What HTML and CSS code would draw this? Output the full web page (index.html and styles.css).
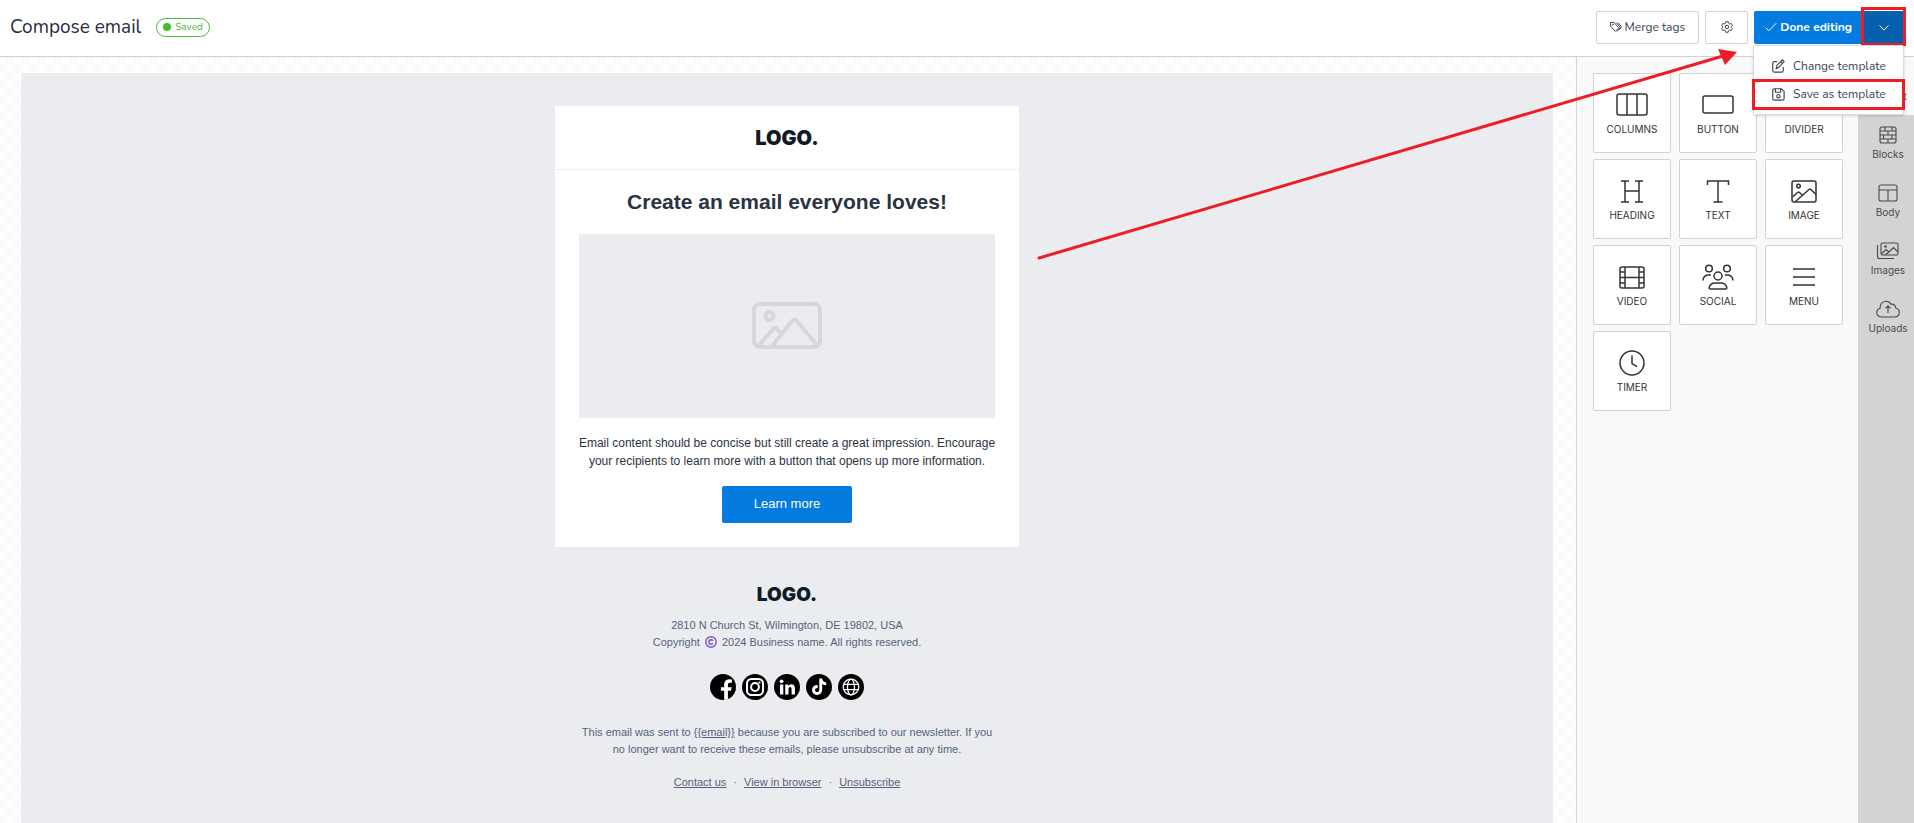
FILE: index.html
```html
<!DOCTYPE html>
<html lang="en">
<head>
    <meta charset="UTF-8">
    <meta name="viewport" content="width=device-width, initial-scale=1.0">
    <title>Compose email</title>
    <link rel="stylesheet" href="styles.css">
</head>
<body>
    <header class="topbar">
        <h1 class="page-title">Compose email</h1>
        <span class="status">Saved</span>

        <div class="actions">
            <button class="btn" type="button">
                <svg class="btn-icon" viewBox="0 0 16 16">
                    <path d="M.8 2v5l6.400 6.800 4.600-4.800L5.200 2zM8 2l6 6.600-4.600 5.400M11 2.300l4.300 5.400-2.600 4"/>
                    <circle cx="3.800" cy="5" r=".6"/>
                </svg>
                Merge tags
            </button>
            <button class="btn btn-square" type="button" aria-label="Settings">
                <svg class="btn-icon" viewBox="0 0 16 16">
                    <path d="M6.400 1h3.200l.5 2 1.500.9 2-.6 1.600 2.700-1.500 1.400v1.200l1.500 1.400-1.600 2.700-2-.6-1.500.9-.5 2H6.400l-.5-2-1.500-.9-2 .6L.8 10l1.500-1.400V7.400L.8 6l1.600-2.700 2 .6L5.900 3z"/>
                    <circle cx="8" cy="8" r="2.300"/>
                </svg>
            </button>
            <div class="split">
                <button class="btn btn-primary" type="button">
                    <svg class="btn-icon" viewBox="0 0 16 16"><path d="M1 9l4 4L15 3"/></svg>
                    Done editing
                </button>
                <button class="btn btn-toggle marked" type="button" aria-label="More actions" aria-expanded="true">
                    <svg class="btn-icon" viewBox="0 0 16 16"><path d="M2 6l6 6 6-6"/></svg>
                </button>
                <div class="dropdown">
                    <button class="dropdown-item" type="button">
                        <svg viewBox="0 0 16 16">
                            <path d="M7 3H4Q2 3 2 5v8q0 2 2 2h8q2 0 2-2V9"/>
                            <path d="M6 11l1-4L13 1l2 2-6 6.500zM11 3l2 2"/>
                        </svg>
                        Change template
                    </button>
                    <button class="dropdown-item marked" type="button">
                        <svg viewBox="0 0 16 16">
                            <path d="M4 2h8L15 5v8q0 2-2 2H4q-2 0-2-2V4q0-2 2-2z"/>
                            <path d="M5 2v4h6V2"/>
                            <circle cx="8.500" cy="10.500" r="1.900"/>
                        </svg>
                        Save as template
                    </button>
                </div>
            </div>
        </div>
    </header>

    <main class="editor">
        <section class="stage">
            <div class="canvas">
                <article class="email">
                    <div class="email-brand logo">LOGO.</div>
                    <div class="email-body">
                        <h2>Create an email everyone loves!</h2>
                        <div class="placeholder">
                            <svg viewBox="0 0 70 48">
                                <rect x="2" y="2" width="66" height="43" rx="6"/>
                                <circle cx="17.500" cy="14" r="4"/>
                                <path d="M6.500 44L21 27q2-2.500 4 0l3.500 4.500M20 44L40.500 18.500q2-2.500 4 0L65.500 44"/>
                            </svg>
                        </div>
                        <p>Email content should be concise but still create a great impression. Encourage your recipients to learn more with a button that opens up more information.</p>
                        <button class="cta" type="button">Learn more</button>
                    </div>
                </article>

                <footer class="email-footer">
                    <div class="logo logo-small">LOGO.</div>
                    <p>2810 N Church St, Wilmington, DE 19802, USA<br>
                        Copyright
                        <svg class="copyright" viewBox="0 0 12 12" role="img" aria-label="©">
                            <circle cx="6" cy="6" r="5.200"/>
                            <path d="M8 4.600Q7.300 3.700 6.100 3.700 3.900 3.800 3.900 6t2.200 2.300Q7.300 8.300 8 7.400"/>
                        </svg>
                        2024 Business name. All rights reserved.</p>
                    <div class="socials">
                        <a href="#" aria-label="Facebook">
                            <svg viewBox="0 0 26 26"><circle cx="13" cy="13" r="13"/><path class="w" d="M14.200 26v-9.300h-3.300v-3.500h3.300v-2.700q0-5 4.700-5.200 1.800 0 3 .3v3.100h-1.800q-2.200-.1-2.200 2v2.500h3.700l-.6 3.500h-3.100V25.300z"/></svg>
                        </a>
                        <a href="#" aria-label="Instagram">
                            <svg viewBox="0 0 26 26"><circle cx="13" cy="13" r="13"/><g class="l"><rect x="5" y="5" width="16" height="16" rx="4.500"/><circle cx="13" cy="13" r="3.900"/></g><circle class="w" cx="17.500" cy="8.500" r="1.100"/></svg>
                        </a>
                        <a href="#" aria-label="LinkedIn">
                            <svg viewBox="0 0 26 26"><circle cx="13" cy="13" r="13"/><path class="w" d="M6 10.500h3.300V20.500H6zM11.200 10.500h3.100v1.400q1-1.700 3-1.700 3.600 0 3.600 4.300v6h-3.300v-5.300q0-2.200-1.500-2.200-1.600 0-1.600 2.200v5.300h-3.300z"/><circle class="w" cx="7.600" cy="7.300" r="1.900"/></svg>
                        </a>
                        <a href="#" aria-label="TikTok">
                            <svg viewBox="0 0 26 26"><circle cx="13" cy="13" r="13"/><path class="w" d="M13.300 4.500h2.900q.4 3.600 4 3.900v2.900q-2.300 0-4-1.200v5.700q-.3 5-5.200 5.200-4.700-.3-5-4.900.3-5 5.700-5.100v3q-2.600-.1-2.800 2.100.2 2 2.200 2.100 2.100-.1 2.200-2.500z"/></svg>
                        </a>
                        <a href="#" aria-label="Website">
                            <svg viewBox="0 0 26 26"><circle cx="13" cy="13" r="13"/><g class="l thin"><circle cx="13" cy="13" r="7.800"/><ellipse cx="13" cy="13" rx="3.500" ry="7.800"/><path d="M6 10.300h14M6 15.700h14"/></g></svg>
                        </a>
                    </div>
                    <p>This email was sent to <a href="#">{{email}}</a> because you are subscribed to our newsletter. If you no longer want to receive these emails, please unsubscribe at any time.</p>
                    <nav class="footer-links">
                        <a href="#">Contact us</a><span>·</span><a href="#">View in browser</a><span>·</span><a href="#">Unsubscribe</a>
                    </nav>
                </footer>
            </div>
        </section>

        <aside class="tools">
            <button class="tool" type="button">
                <svg viewBox="0 0 32 26"><rect x="1" y="2" width="30" height="21" rx="2"/><path d="M11 2v21M21 2v21"/></svg>
                Columns
            </button>
            <button class="tool" type="button">
                <svg viewBox="0 0 32 26"><rect x="1" y="4" width="30" height="17" rx="2"/></svg>
                Button
            </button>
            <button class="tool" type="button">
                <svg viewBox="0 0 32 26"><path d="M1 13h30"/></svg>
                Divider
            </button>
            <button class="tool" type="button">
                <svg viewBox="0 0 32 26"><path d="M5 3h8M19 3h8M5 24h8M19 24h8M9 3v21M23 3v21M9 13h14"/></svg>
                Heading
            </button>
            <button class="tool" type="button">
                <svg viewBox="0 0 32 26"><path d="M5.500 7V3h21v4M16 3v21M11.500 24h9"/></svg>
                Text
            </button>
            <button class="tool" type="button">
                <svg viewBox="0 0 32 26"><rect x="4" y="3" width="24" height="21" rx="2"/><circle cx="10.500" cy="8" r="1.800"/><path d="M4.500 19l5-4.500q1-.8 2 0l2.500 2.300M7.500 23.500L21 11.500q1-.8 2 0l5 5"/></svg>
                Image
            </button>
            <button class="tool" type="button">
                <svg viewBox="0 0 32 26"><rect x="4" y="3" width="24" height="21" rx="2"/><path d="M9 3v21M23 3v21M9 13.500h14M4 8h5M4 13.500h5M4 19h5M23 8h5M23 13.500h5M23 19h5"/></svg>
                Video
            </button>
            <button class="tool" type="button">
                <svg viewBox="0 0 32 26"><circle cx="7" cy="4.500" r="3.300"/><circle cx="25" cy="4.500" r="3.300"/><circle cx="16" cy="12" r="4"/><path d="M1 16.500Q1.500 11.300 6 11h3M31 16.500Q30.500 11.300 26 11h-3M8.500 25H23.500q1.500 0 1.300-1.500Q23.500 19 19 19h-6q-4.500 0-5.800 4.500Q7 25 8.500 25z"/></svg>
                Social
            </button>
            <button class="tool" type="button">
                <svg viewBox="0 0 32 26"><path d="M5 5h22M5 13h22M5 21h22"/></svg>
                Menu
            </button>
            <button class="tool" type="button">
                <svg viewBox="0 0 32 26"><circle cx="16" cy="13" r="12"/><path d="M16 5.500v8.200l5 3"/></svg>
                Timer
            </button>
        </aside>

        <nav class="tabs">
            <button class="tab active" type="button">
                <svg viewBox="0 0 24 20"><rect x="4" y="2" width="7" height="7"/><rect x="13" y="2" width="7" height="7"/><rect x="4" y="11" width="7" height="7"/><rect x="13" y="11" width="7" height="7"/></svg>
                Content
            </button>
            <button class="tab" type="button">
                <svg viewBox="0 0 24 20"><rect x="4" y="2" width="16" height="16" rx="2"/><path d="M4 6h16M4 10h16M4 14h16M9 2v4M16 2v4M12 6v4M7.500 10v4M16 10v4M12 14v4"/></svg>
                Blocks
            </button>
            <button class="tab" type="button">
                <svg viewBox="0 0 24 20"><rect x="3" y="2" width="18" height="16" rx="2"/><path d="M3 7h18M12 7v11"/></svg>
                Body
            </button>
            <button class="tab" type="button">
                <svg viewBox="0 0 24 20"><rect x="5" y="2" width="17" height="12" rx="1.500"/><path d="M1.500 4v11.500q0 2 2 2H18M6 12.500l4-4 3 2.500 4.500-4.500L22 11M9 14l4-3"/><circle cx="9.500" cy="5.500" r=".8"/></svg>
                Images
            </button>
            <button class="tab" type="button">
                <svg viewBox="0 0 24 20"><path d="M5.500 18Q.8 17.500.8 13.500q.2-3.200 3.300-4.200-.3-6 5.400-7 3.800-.2 5.400 3 4-1 4.900 3.700 3.400.8 3.500 4.400-.2 4.200-4.500 4.600zM12 14V7M9.500 9.300L12 6.800l2.500 2.500"/></svg>
                Uploads
            </button>
        </nav>
    </main>

    <!-- Pointer towards the dropdown -->
    <svg class="pointer" viewBox="0 0 700 214" aria-hidden="true">
        <path d="M2 210L686 8"/>
        <polygon points="681,1 700,4 688,17"/>
    </svg>
</body>
</html>
```
FILE: styles.css
```css
* {
    margin: 0;
    padding: 0;
    box-sizing: border-box;
}

body {
    height: 100vh;
    display: flex;
    flex-direction: column;
    position: relative;
    overflow: hidden;
    background: #fff;
    color: #3a4254;
    font-family: Nunito, Lato, sans-serif;
}

button {
    font: inherit;
    color: inherit;
    cursor: pointer;
}

svg {
    fill: none;
    stroke: currentColor;
    flex: none;
}

/* Top bar */
.topbar {
    display: flex;
    align-items: center;
    height: 57px;
    padding: 0 10px 2px;
    border-bottom: 1px solid #cbd0dc;
    flex: none;
}

.page-title {
    font-size: 19px;
    font-weight: 400;
    color: #252f3f;
}

.status {
    display: flex;
    align-items: center;
    gap: 4px;
    height: 19px;
    margin-left: 15px;
    padding: 0 6px;
    border: 1px solid #45bb35;
    border-radius: 10px;
    color: #45bb35;
    font-size: 10px;
}

.status::before {
    content: "";
    width: 8px;
    height: 8px;
    border-radius: 50%;
    background: #45bb35;
}

.actions {
    display: flex;
    gap: 6px;
    margin-left: auto;
}

.btn {
    display: flex;
    align-items: center;
    justify-content: center;
    gap: 3px;
    height: 33px;
    padding: 0 13px;
    border: 1px solid #ccd2de;
    border-radius: 2px;
    background: #fff;
    font-size: 12px;
    position: relative;
}

.btn-icon {
    width: 12px;
    height: 12px;
    stroke-width: 1.3;
}

.btn-square {
    width: 43px;
}

.split {
    display: flex;
    position: relative;
}

.btn-primary {
    padding: 0 11px;
    border: 0;
    border-radius: 2px 0 0 2px;
    background: #037bdf;
    color: #fff;
    font-weight: 700;
}

.btn-toggle {
    width: 41px;
    border: 0;
    border-radius: 0 2px 2px 0;
    background: #0560ad;
    color: #fff;
}

.dropdown {
    position: absolute;
    top: 34px;
    right: 0;
    z-index: 2;
    width: 151px;
    padding: 6px 0;
    background: #fff;
    border: 1px solid #d5dae4;
    border-radius: 2px;
    box-shadow: 0 1px 3px rgba(0, 0, 0, 0.15);
}

.dropdown-item {
    display: flex;
    align-items: center;
    gap: 8px;
    width: 100%;
    height: 28px;
    padding: 0 17px;
    border: 0;
    background: none;
    font-size: 12px;
    white-space: nowrap;
    position: relative;
}

.dropdown-item svg {
    width: 14px;
    height: 14px;
    stroke-width: 1.3;
}

/* Red highlight frame */
.marked::after {
    content: "";
    position: absolute;
    inset: -4px -2px -2px;
    border: 3px solid #ee1c24;
}

.dropdown-item.marked::after {
    inset: -1px -2px -2px;
}

/* Editor */
.editor {
    display: flex;
    flex: 1;
    min-height: 0;
}

.stage {
    flex: 1;
    display: flex;
    padding: 16px 23px 0 21px;
    background: repeating-conic-gradient(#fff 0 25%, #fafafa 0 50%) 5px 0 / 16px 16px;
}

.canvas {
    flex: 1;
    padding: 33px 0;
    background: #ebecf0;
    font-family: "Liberation Sans", Arial, sans-serif;
    text-align: center;
}

.email {
    max-width: 464px;
    margin: 0 auto;
    background: #fff;
}

.logo {
    color: #111a27;
    font-family: Inter, sans-serif;
    font-size: 20px;
    font-weight: 900;
    line-height: 24px;
}

.email-brand {
    padding: 20px 0 19px;
    border-bottom: 1px solid #ebecf0;
}

.email-body {
    padding: 20px 24px 24px;
}

.email-body h2 {
    margin-bottom: 20px;
    font-size: 21px;
    line-height: 24px;
    color: #2a3342;
}

.placeholder {
    display: flex;
    justify-content: center;
    padding: 68px 0;
    background: #ebecf0;
    color: #d6d7da;
}

.placeholder svg {
    width: 70px;
    height: 48px;
    stroke-width: 4;
}

.email-body p {
    margin: 16px -8px;
    color: #2a3342;
    font-size: 12px;
    line-height: 18px;
}

.cta {
    height: 37px;
    padding: 0 32px 2px;
    border: 0;
    border-radius: 2px;
    background: #037bdf;
    color: #fff;
    font-size: 13px;
}

.email-footer {
    max-width: 464px;
    margin: 0 auto;
    padding: 36px 22px 0;
    color: #56627c;
    font-size: 11px;
    line-height: 17px;
}

.email-footer a {
    color: inherit;
}

.logo-small {
    font-size: 19px;
    margin-bottom: 10px;
}

.copyright {
    width: 12px;
    height: 12px;
    margin: 0 2px;
    vertical-align: -2px;
    color: #7757c9;
    stroke-width: 1.4;
}

.socials {
    display: flex;
    justify-content: center;
    gap: 6px;
    margin: 23px 0 24px;
}

.socials svg {
    display: block;
    width: 26px;
    height: 26px;
    fill: #000;
    stroke: none;
}

.socials .w {
    fill: #fff;
}

.socials .l {
    fill: none;
    stroke: #fff;
    stroke-width: 2;
}

.socials .thin {
    stroke-width: 1.3;
}

.footer-links {
    display: flex;
    justify-content: center;
    gap: 7px;
    margin-top: 16px;
}

/* Content tools */
.tools {
    display: grid;
    grid-template-columns: repeat(3, 78px);
    grid-auto-rows: 80px;
    gap: 6px 8px;
    align-content: start;
    padding: 16px 15px 0 16px;
    border-left: 1px solid #d0d4dc;
    background: #f9f9f9;
}

.tool {
    display: flex;
    flex-direction: column;
    align-items: center;
    gap: 5px;
    padding-top: 18px;
    border: 1px solid #d2d2d2;
    border-radius: 2px;
    background: #fff;
    color: #333;
    font-family: Inter, sans-serif;
    font-size: 10px;
    line-height: 12px;
    text-transform: uppercase;
}

.tool svg {
    width: 32px;
    height: 26px;
    stroke-width: 1.5;
}

.tabs {
    width: 56px;
    background: #d3d3d3;
}

.tab {
    display: flex;
    flex-direction: column;
    align-items: center;
    gap: 3px;
    width: 100%;
    height: 58px;
    padding: 10px 0 0 4px;
    border: 0;
    background: none;
    color: #4a4a4a;
    font-family: Inter, sans-serif;
    font-size: 10px;
    line-height: 12px;
}

.tab.active {
    background: #f9f9f9;
    color: #0560ad;
}

.tab svg {
    width: 24px;
    height: 20px;
    stroke-width: 1.1;
}

.pointer {
    position: absolute;
    top: 48px;
    right: 177px;
    z-index: 3;
    width: 700px;
    height: 214px;
    stroke: #ee1c24;
    stroke-width: 3;
    stroke-linecap: round;
    pointer-events: none;
}

.pointer polygon {
    fill: #ee1c24;
    stroke: none;
}
```
